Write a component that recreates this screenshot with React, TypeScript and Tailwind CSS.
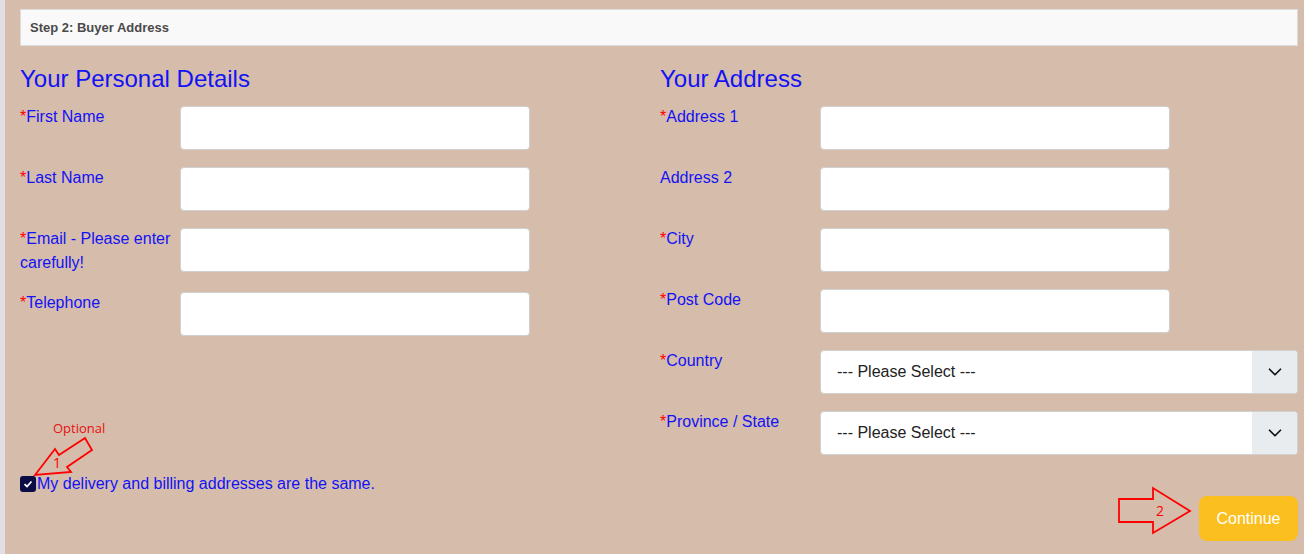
import { ChevronDown } from "lucide-react";

const personal = [
  { label: "First Name", req: true },
  { label: "Last Name", req: true },
  { label: "Email - Please enter carefully!", req: true },
  { label: "Telephone", req: true },
];

const address = [
  { label: "Address 1", req: true },
  { label: "Address 2", req: false },
  { label: "City", req: true },
  { label: "Post Code", req: true },
];

function Label({ text, req }: { text: string; req: boolean }) {
  return (
    <label className="w-[160px] shrink-0 pr-2 -mt-[1px] text-[16px] leading-6 text-[#1212f5]">
      {req && <span className="text-[#ff0000]">*</span>}
      {text}
    </label>
  );
}

function Field({ text, req }: { text: string; req: boolean }) {
  return (
    <div className="flex items-start mb-[17px]">
      <Label text={text} req={req} />
      <input className="w-[350px] h-[44px] bg-white border border-[#d0d0d0] rounded-[4px] px-3 outline-none" />
    </div>
  );
}

function SelectField({ text }: { text: string }) {
  return (
    <div className="flex items-start mb-[17px]">
      <Label text={text} req={true} />
      <div className="flex-1 h-[44px] flex bg-white border border-[#d0d0d0] rounded-[4px] overflow-hidden">
        <div className="flex-1 flex items-center pl-4 text-[16px] text-[#222]">--- Please Select ---</div>
        <div className="w-[45px] bg-[#e9ecef] flex items-center justify-center text-[#111]">
          <ChevronDown size={22} strokeWidth={1.8} />
        </div>
      </div>
    </div>
  );
}

export default function App() {
  return (
    <div className="w-[1304px] h-[554px] flex overflow-hidden" style={{ fontFamily: '"Liberation Sans", Arial, sans-serif' }}>
      <div className="w-[5px] shrink-0 bg-[#e1dfe4]" />
      <div className="relative flex-1 bg-[#d5bcab] pl-[15px] pr-[6px] pt-[9px]">
        <div className="h-[37px] bg-[#f9f9f9] border border-[#dcdcdc] flex items-center pl-[9px] text-[13px] font-bold text-[#4a4a4a]">
          Step 2: Buyer Address
        </div>

        <div className="flex">
          <div className="w-[640px] shrink-0">
            <h2 className="mt-[18px] mb-[13px] text-[24px] leading-[29px] text-[#1212f5]">Your Personal Details</h2>
            {personal.map((p) => (
              <Field key={p.label} text={p.label} req={p.req} />
            ))}
          </div>
          <div className="flex-1">
            <h2 className="mt-[18px] mb-[13px] text-[24px] leading-[29px] text-[#1212f5]">Your Address</h2>
            {address.map((p) => (
              <Field key={p.label} text={p.label} req={p.req} />
            ))}
            <SelectField text="Country" />
            <SelectField text="Province / State" />
          </div>
        </div>

        <div className="flex items-center h-6 text-[16px] text-[#1212f5]">
          <span className="w-4 h-4 rounded-[3px] bg-[#0b0b45] flex items-center justify-center">
            <svg width="10" height="10" viewBox="0 0 10 10">
              <path d="M1.5 5.2 L4 7.5 L8.5 2.5" fill="none" stroke="white" strokeWidth="1.8" />
            </svg>
          </span>
          <span className="ml-[1px]">My delivery and billing addresses are the same.</span>
        </div>

        <div className="flex justify-end">
          <button className="w-[99px] h-[45px] rounded-[8px] bg-[#fbbf1f] text-white text-[16px]">Continue</button>
        </div>

        {/* annotation 1 */}
        <div className="absolute left-[48px] top-[419px] text-[13px] text-[#e81010]" style={{ fontFamily: '"Open Sans", sans-serif' }}>
          Optional
        </div>
        <svg className="absolute top-0" width="120" height="554" style={{ left: -5 }} viewBox="0 0 120 554">
          <polygon
            points="35,475 55,449 59,455 85,438 92,450 67,467 71,472"
            fill="none"
            stroke="#ff0000"
            strokeWidth="1.8"
            strokeLinejoin="miter"
          />
          <text x="53" y="468" fontSize="14" fill="#ff0000" fontFamily="Open Sans, sans-serif">1</text>
        </svg>

        {/* annotation 2 */}
        <svg className="absolute top-0" width="100" height="554" style={{ left: 1110 }} viewBox="1115 0 100 554">
          <polygon
            points="1119,499 1153,499 1153,488 1190,511 1153,533 1153,522 1119,522"
            fill="none"
            stroke="#ff0000"
            strokeWidth="1.8"
          />
          <text x="1156" y="516" fontSize="14" fill="#ff0000" fontFamily="Open Sans, sans-serif">2</text>
        </svg>
      </div>
    </div>
  );
}
